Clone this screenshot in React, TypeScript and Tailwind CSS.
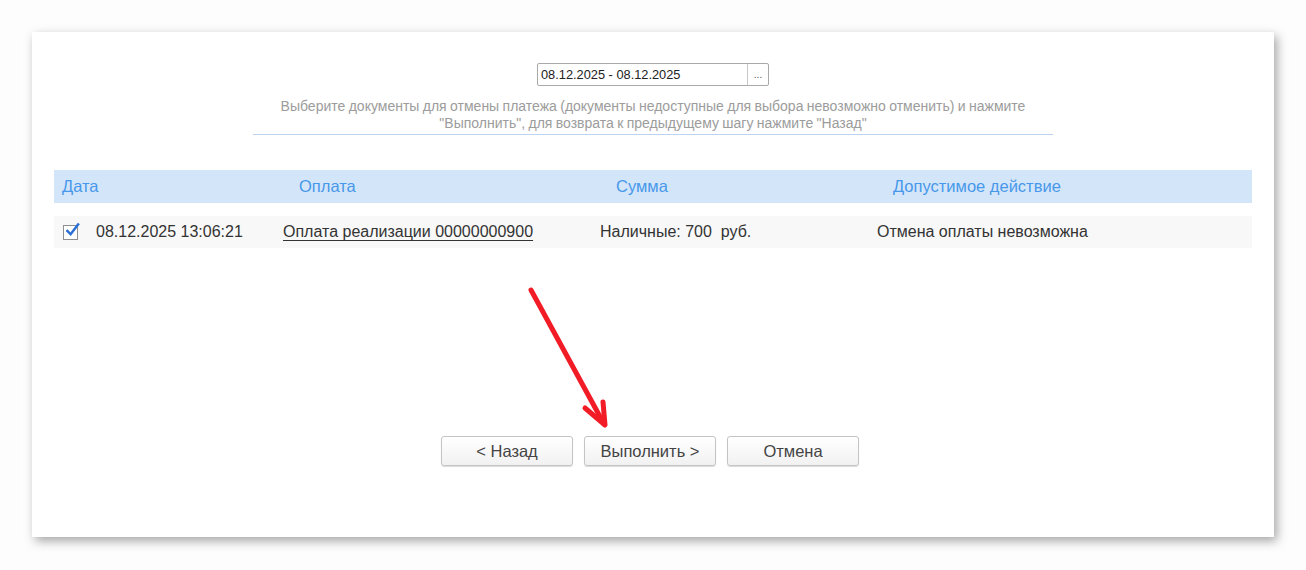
import React from 'react'

const font = { fontFamily: '"Liberation Sans", Arial, sans-serif' }

const Button = ({ label }: { label: string }) => (
    <button className="w-[132px] h-[30px] rounded-[3px] border border-[#c4c4c4] bg-gradient-to-b from-white to-[#f1f1f1] shadow-[0_1px_1px_rgba(0,0,0,0.15)] text-[16.5px] text-[#444]">
        {label}
    </button>
)

const App = () => {
    return (
        <div className="w-[1306px] h-[570px] bg-[#fdfdfd] pt-[32px] pl-[32px] overflow-hidden" style={font}>
            <div className="relative w-[1242px] h-[505px] bg-white shadow-[3px_4px_10px_rgba(0,0,0,0.35)] px-[22px] pt-[31px]">
                {/* Period */}
                <div className="flex justify-center">
                    <div className="flex h-[23px] w-[232px] rounded-[2px] border border-[#a9a9a9] bg-white">
                        <div className="flex-1 pl-[3px] text-[12.8px] leading-[21px] text-[#222]">08.12.2025 - 08.12.2025</div>
                        <div className="w-[21px] border-l border-[#c8c8c8] text-center text-[10px] leading-[21px] text-[#555]">...</div>
                    </div>
                </div>

                {/* Hint */}
                <div className="mx-auto mt-[12px] w-[800px] border-b border-[#bcd4f2] pb-[2px] text-center text-[14px] leading-[17px] text-[#9c9c9c] [word-spacing:-0.5px]">
                    Выберите документы для отмены платежа (документы недоступные для выбора невозможно отменить) и нажмите
                    <br />
                    "Выполнить", для возврата к предыдущему шагу нажмите "Назад"
                </div>

                {/* Table */}
                <div className="mt-[35px]">
                    <div className="grid h-[33px] grid-cols-[229px_317px_277px_1fr] items-center bg-[#d3e5f9] text-[16.5px] text-[#4798ea]">
                        <div className="pl-[8px]">Дата</div>
                        <div className="pl-[16px]">Оплата</div>
                        <div className="pl-[16px]">Сумма</div>
                        <div className="pl-[16px]">Допустимое действие</div>
                    </div>
                    <div className="mt-[13px] grid h-[32px] grid-cols-[229px_317px_277px_1fr] items-center bg-[#f8f8f8] text-[16px] text-[#333]">
                        <div className="flex items-center pl-[9px]">
                            <span className="relative mr-[18px] h-[15px] w-[15px] border border-[#8f8f8f] bg-white">
                                <svg viewBox="0 0 16 16" className="absolute -top-[3px] left-[1px] h-[15px] w-[15px]">
                                    <path d="M2.5 8.5 L6 12 L14 1.5" fill="none" stroke="#2a6fd6" strokeWidth="2.6" strokeLinecap="square" />
                                </svg>
                            </span>
                            <span>08.12.2025 13:06:21</span>
                        </div>
                        <div>
                            <a href="#" className="underline underline-offset-[3px] decoration-[#333]">
                                Оплата реализации 00000000900
                            </a>
                        </div>
                        <div className="whitespace-pre">Наличные: 700  руб.</div>
                        <div>Отмена оплаты невозможна</div>
                    </div>
                </div>

                {/* Buttons */}
                <div className="mt-[188px] flex justify-center gap-[11px] pr-[6px]">
                    <Button label="< Назад" />
                    <Button label="Выполнить >" />
                    <Button label="Отмена" />
                </div>

                {/* Red arrow annotation */}
                <svg className="absolute left-0 top-0 pointer-events-none" width="1242" height="505">
                    <g stroke="#f21c26" strokeWidth="5" strokeLinecap="round" strokeLinejoin="round" fill="none">
                        <path d="M499 258 L572 392" />
                        <path d="M553 376 L573 393 L571 370" />
                    </g>
                </svg>
            </div>
        </div>
    )
}

export default App
